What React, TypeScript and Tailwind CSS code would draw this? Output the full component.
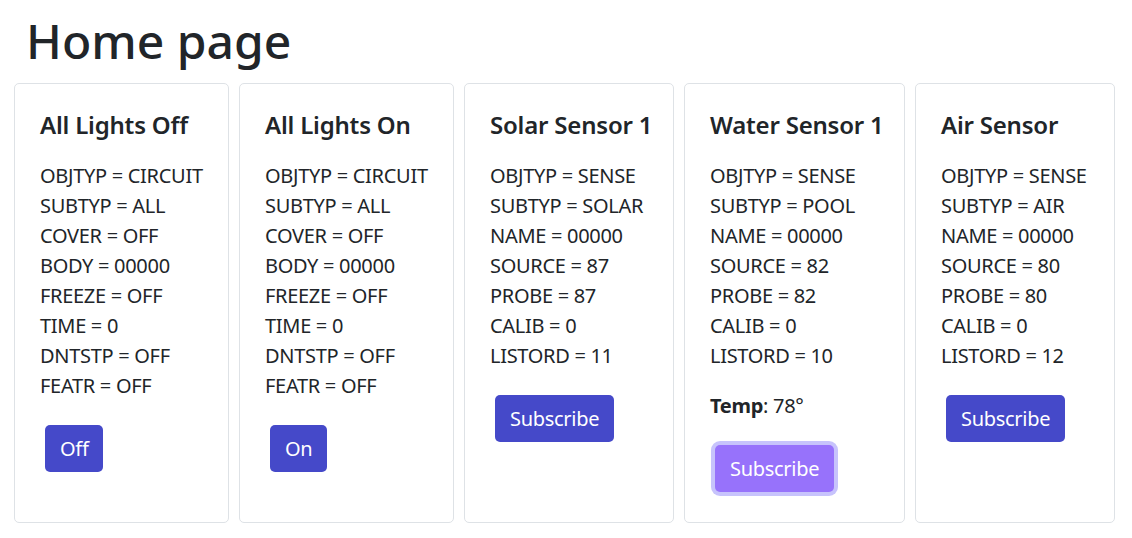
import React from "react";

type Device = {
  title: string;
  width: string;
  props: [string, string][];
  temp?: string;
  button: string;
  focused?: boolean;
};

const devices: Device[] = [
  {
    title: "All Lights Off",
    width: "w-[215px]",
    props: [
      ["OBJTYP", "CIRCUIT"],
      ["SUBTYP", "ALL"],
      ["COVER", "OFF"],
      ["BODY", "00000"],
      ["FREEZE", "OFF"],
      ["TIME", "0"],
      ["DNTSTP", "OFF"],
      ["FEATR", "OFF"],
    ],
    button: "Off",
  },
  {
    title: "All Lights On",
    width: "w-[215px]",
    props: [
      ["OBJTYP", "CIRCUIT"],
      ["SUBTYP", "ALL"],
      ["COVER", "OFF"],
      ["BODY", "00000"],
      ["FREEZE", "OFF"],
      ["TIME", "0"],
      ["DNTSTP", "OFF"],
      ["FEATR", "OFF"],
    ],
    button: "On",
  },
  {
    title: "Solar Sensor 1",
    width: "w-[210px]",
    props: [
      ["OBJTYP", "SENSE"],
      ["SUBTYP", "SOLAR"],
      ["NAME", "00000"],
      ["SOURCE", "87"],
      ["PROBE", "87"],
      ["CALIB", "0"],
      ["LISTORD", "11"],
    ],
    button: "Subscribe",
  },
  {
    title: "Water Sensor 1",
    width: "w-[221px]",
    props: [
      ["OBJTYP", "SENSE"],
      ["SUBTYP", "POOL"],
      ["NAME", "00000"],
      ["SOURCE", "82"],
      ["PROBE", "82"],
      ["CALIB", "0"],
      ["LISTORD", "10"],
    ],
    temp: "78°",
    button: "Subscribe",
    focused: true,
  },
  {
    title: "Air Sensor",
    width: "w-[200px]",
    props: [
      ["OBJTYP", "SENSE"],
      ["SUBTYP", "AIR"],
      ["NAME", "00000"],
      ["SOURCE", "80"],
      ["PROBE", "80"],
      ["CALIB", "0"],
      ["LISTORD", "12"],
    ],
    button: "Subscribe",
  },
];

const DeviceCard: React.FC<{ device: Device }> = ({ device }) => (
  <div
    className={`${device.width} shrink-0 border border-[#dee2e6] rounded-[5px] bg-white px-[25px] pt-[26px] pb-[30px]`}
  >
    <h5 className="text-[24px] leading-[29px] font-semibold tracking-[-0.2px] mb-[22px] whitespace-nowrap">
      {device.title}
    </h5>
    <div className="text-[20px] leading-[30px] tracking-[-0.3px] whitespace-nowrap">
      {device.props.map(([k, v]) => (
        <div key={k}>
          {k} = {v}
        </div>
      ))}
    </div>
    {device.temp && (
      <p className="mt-[20px] text-[20px] leading-[30px] tracking-[-0.3px]">
        <span className="font-bold">Temp</span>: {device.temp}
      </p>
    )}
    <button
      className={`mt-[24px] ml-[5px] px-[15px] py-[8px] text-[20px] leading-[31px] tracking-[-0.3px] text-white rounded-[5px] ${
        device.focused
          ? "bg-[#9772fb] ring-4 ring-[#c7c3fc]"
          : "bg-[#4549c9]"
      }`}
    >
      {device.button}
    </button>
  </div>
);

export default function App() {
  return (
    <div
      className="min-h-screen bg-white text-[#212529] px-[14px]"
      style={{ fontFamily: '"Noto Sans", "Open Sans", sans-serif' }}
    >
      <h1 className="text-[48px] leading-[58px] font-medium pl-[12px] pt-[12px] pb-[13px]">
        Home page
      </h1>
      <div className="flex gap-[10px] items-stretch">
        {devices.map((d) => (
          <DeviceCard key={d.title} device={d} />
        ))}
      </div>
    </div>
  );
}
